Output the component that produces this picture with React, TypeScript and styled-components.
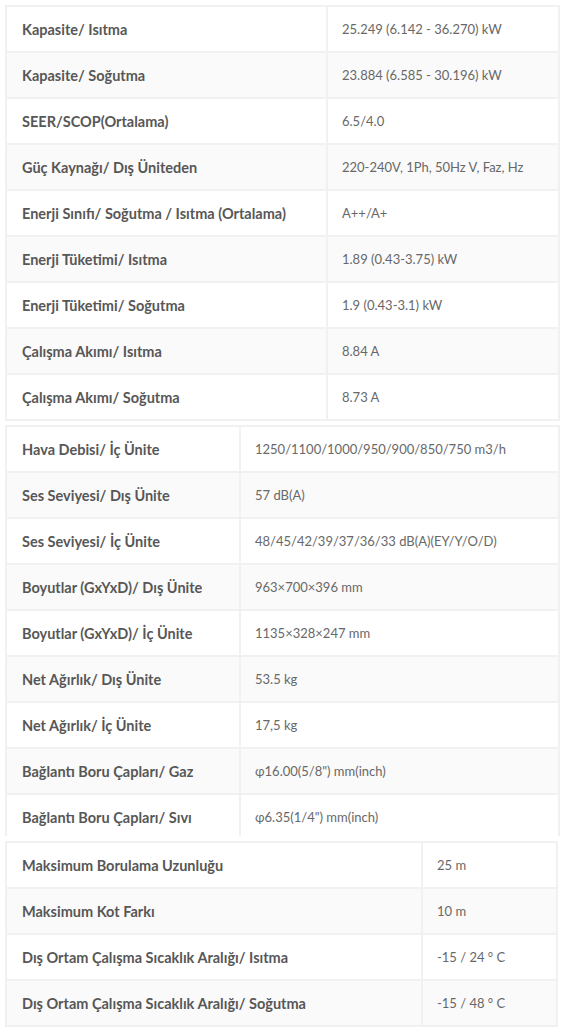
import React from "react";
import styled, { createGlobalStyle } from "styled-components";

const Global = createGlobalStyle`
  html, body { margin: 0; padding: 0; background: #ffffff; }
  body { font-family: Lato, "Open Sans", sans-serif; }
`;

const Page = styled.div`
  display: flex;
  flex-direction: column;
  padding: 5px 7px 0 5px;
`;

const Clip = styled.div<{ $h?: number; $mt: number; $mr?: number }>`
  margin-top: ${(p) => p.$mt}px;
  margin-right: ${(p) => p.$mr ?? 0}px;
  ${(p) => (p.$h ? `height: ${p.$h}px; overflow: hidden;` : "")}
`;

const Table = styled.div<{ $col: number }>`
  display: grid;
  grid-template-columns: ${(p) => p.$col}px 1fr;
  border-top: 2px solid #f1f1f1;
  border-left: 2px solid #f1f1f1;
`;

const Cell = styled.div<{ $alt: boolean }>`
  height: 44px;
  display: flex;
  align-items: center;
  padding: 0 14px;
  box-sizing: content-box;
  border-right: 2px solid #f1f1f1;
  border-bottom: 2px solid #f1f1f1;
  background: ${(p) => (p.$alt ? "#fafafa" : "#ffffff")};
  font-size: 13px;
  white-space: nowrap;
  color: #686868;
  font-weight: 400;
`;

const LabelCell = styled(Cell)`
  padding: 0 0 0 15px;
  font-size: 14.5px;
  color: #575757;
  font-weight: 700;
`;

type Row = [string, string];

const t1: Row[] = [
  ["Kapasite/ Isıtma", "25.249 (6.142 - 36.270) kW"],
  ["Kapasite/ Soğutma", "23.884 (6.585 - 30.196) kW"],
  ["SEER/SCOP(Ortalama)", "6.5/4.0"],
  ["Güç Kaynağı/ Dış Üniteden", "220-240V, 1Ph, 50Hz V, Faz, Hz"],
  ["Enerji Sınıfı/ Soğutma / Isıtma (Ortalama)", "A++/A+"],
  ["Enerji Tüketimi/ Isıtma", "1.89 (0.43-3.75) kW"],
  ["Enerji Tüketimi/ Soğutma", "1.9 (0.43-3.1) kW"],
  ["Çalışma Akımı/ Isıtma", "8.84 A"],
  ["Çalışma Akımı/ Soğutma", "8.73 A"],
];

const t2: Row[] = [
  ["Hava Debisi/ İç Ünite", "1250/1100/1000/950/900/850/750 m3/h"],
  ["Ses Seviyesi/ Dış Ünite", "57 dB(A)"],
  ["Ses Seviyesi/ İç Ünite", "48/45/42/39/37/36/33 dB(A)(EY/Y/O/D)"],
  ["Boyutlar (GxYxD)/ Dış Ünite", "963×700×396 mm"],
  ["Boyutlar (GxYxD)/ İç Ünite", "1135×328×247 mm"],
  ["Net Ağırlık/ Dış Ünite", "53.5 kg"],
  ["Net Ağırlık/ İç Ünite", "17,5 kg"],
  ["Bağlantı Boru Çapları/ Gaz", "φ16.00(5/8\") mm(inch)"],
  ["Bağlantı Boru Çapları/ Sıvı", "φ6.35(1/4\") mm(inch)"],
];

const t3: Row[] = [
  ["Maksimum Borulama Uzunluğu", "25 m"],
  ["Maksimum Kot Farkı", "10 m"],
  ["Dış Ortam Çalışma Sıcaklık Aralığı/ Isıtma", "-15 / 24 ° C"],
  ["Dış Ortam Çalışma Sıcaklık Aralığı/ Soğutma", "-15 / 48 ° C"],
];

function SpecTable({ rows, col }: { rows: Row[]; col: number }) {
  return (
    <Table $col={col}>
      {rows.map(([k, v], i) => (
        <React.Fragment key={k}>
          <LabelCell $alt={i % 2 === 1}>{k}</LabelCell>
          <Cell $alt={i % 2 === 1}>{v}</Cell>
        </React.Fragment>
      ))}
    </Table>
  );
}

export default function App() {
  return (
    <>
      <Global />
      <Page>
        <Clip $mt={0}>
          <SpecTable rows={t1} col={321} />
        </Clip>
        <Clip $mt={4} $h={411}>
          <SpecTable rows={t2} col={234} />
        </Clip>
        <Clip $mt={5} $mr={2}>
          <SpecTable rows={t3} col={416} />
        </Clip>
      </Page>
    </>
  );
}
